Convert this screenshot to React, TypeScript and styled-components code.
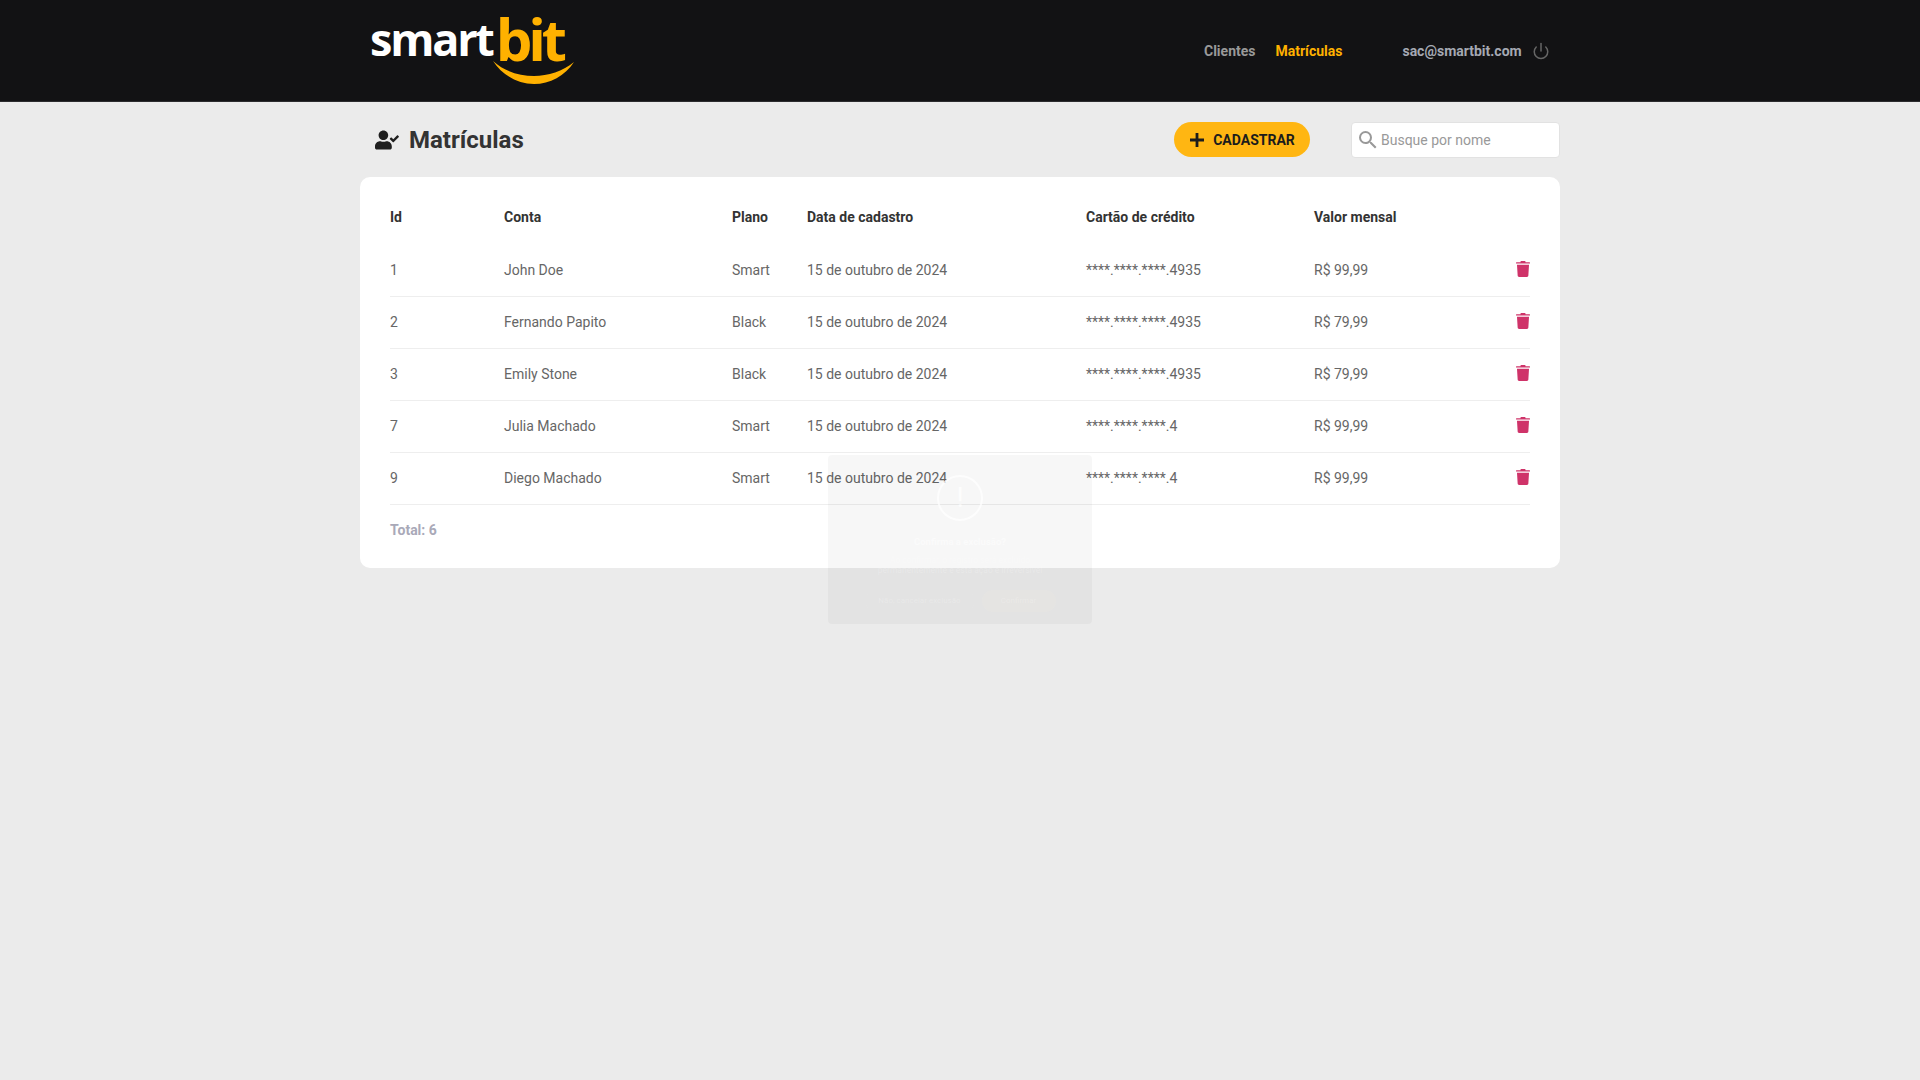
import * as React from 'react';
import styled, { createGlobalStyle } from 'styled-components';
import { FaUserCheck } from 'react-icons/fa';
import { FiPower } from 'react-icons/fi';
import { MdSearch } from 'react-icons/md';

const GlobalStyle = createGlobalStyle`
    * {
        margin: 0;
        padding: 0;
        box-sizing: border-box;
    }
    body {
        background: #ebebeb;
        font-family: Roboto, "Liberation Sans", sans-serif;
        font-size: 14px;
        color: #333;
    }
`;

const rows = [
    { id: 1, name: 'John Doe', plan: 'Smart', card: '****.****.****.4935', price: 'R$ 99,99' },
    { id: 2, name: 'Fernando Papito', plan: 'Black', card: '****.****.****.4935', price: 'R$ 79,99' },
    { id: 3, name: 'Emily Stone', plan: 'Black', card: '****.****.****.4935', price: 'R$ 79,99' },
    { id: 7, name: 'Julia Machado', plan: 'Smart', card: '****.****.****.4', price: 'R$ 99,99' },
    { id: 9, name: 'Diego Machado', plan: 'Smart', card: '****.****.****.4', price: 'R$ 99,99' }
];

const TrashIcon = () => (
    <TrashSvg viewBox="0 0 14 16">
        <path d="M4.5 0.6 C4.5 0.2 4.8 0 5.1 0 L8.9 0 C9.2 0 9.5 0.2 9.5 0.6 L9.5 1.2 L13.5 1.2 C13.8 1.2 14 1.4 14 1.7 L14 2.6 L0 2.6 L0 1.7 C0 1.4 0.2 1.2 0.5 1.2 L4.5 1.2 Z" />
        <path d="M1 3.8 L13 3.8 L12.3 14.8 C12.2 15.5 11.7 16 11 16 L3 16 C2.3 16 1.8 15.5 1.7 14.8 Z" />
    </TrashSvg>
);

const PlusIcon = () => (
    <PlusSvg viewBox="0 0 16 16">
        <path d="M6.4 0 H9.6 V6.4 H16 V9.6 H9.6 V16 H6.4 V9.6 H0 V6.4 H6.4 Z" />
    </PlusSvg>
);

export default function App(): JSX.Element {
    return (
        <Page>
            <GlobalStyle />
            <Header>
                <HeaderInner>
                    <Logo>
                        <LogoSmart>smart</LogoSmart>
                        <LogoBit>bit</LogoBit>
                        <Smile viewBox="0 0 82 24">
                            <path d="M0 0 C12 11 27 15 41 15 C55 15 70 10 81 1 C72 15 57 23 41 23 C25 23 9 14 0 0 Z" fill="#ffb100" />
                        </Smile>
                    </Logo>
                    <Nav>
                        <NavLink>Clientes</NavLink>
                        <NavLink $active>Matrículas</NavLink>
                    </Nav>
                    <UserBox>
                        <UserMail>sac@smartbit.com</UserMail>
                        <FiPower size={18} color="#666" />
                    </UserBox>
                </HeaderInner>
            </Header>
            <Main>
                <TitleBar>
                    <Title>
                        <FaUserCheck size={24} color="#1f1f1f" />
                        Matrículas
                    </Title>
                    <AddButton>
                        <PlusIcon />
                        Cadastrar
                    </AddButton>
                    <SearchBox>
                        <MdSearch size={24} color="#999" />
                        <SearchInput placeholder="Busque por nome" />
                    </SearchBox>
                </TitleBar>
                <Card>
                    <Table>
                        <colgroup>
                            <col width="114" />
                            <col width="228" />
                            <col width="75" />
                            <col width="279" />
                            <col width="228" />
                            <col width="170" />
                            <col />
                        </colgroup>
                        <thead>
                            <tr>
                                <Th>Id</Th>
                                <Th>Conta</Th>
                                <Th>Plano</Th>
                                <Th>Data de cadastro</Th>
                                <Th>Cartão de crédito</Th>
                                <Th>Valor mensal</Th>
                                <Th />
                            </tr>
                        </thead>
                        <tbody>
                            {rows.map(row => (
                                <tr key={row.id}>
                                    <Td>{row.id}</Td>
                                    <Td>{row.name}</Td>
                                    <Td>{row.plan}</Td>
                                    <Td>15 de outubro de 2024</Td>
                                    <Td>{row.card}</Td>
                                    <Td>{row.price}</Td>
                                    <ActionTd><TrashIcon /></ActionTd>
                                </tr>
                            ))}
                        </tbody>
                    </Table>
                    <Total>Total: 6</Total>
                </Card>
            </Main>
            <Modal>
                <AlertRing>!</AlertRing>
                <ModalTitle>Confirma a exclusão?</ModalTitle>
                <ModalText>Ao confirmar, o registro será excluído permanentemente e esta ação é irreversível</ModalText>
                <ModalActions>
                    <GhostButton>Não, cancelar exclusão</GhostButton>
                    <ConfirmButton>Confirmar</ConfirmButton>
                </ModalActions>
            </Modal>
        </Page>
    );
}

const Page = styled.div`
    min-height: 1080px;
`;

const Header = styled.header`
    height: 102px;
    background: #121214;
    border-bottom: 1px solid #2c2c2e;
`;

const HeaderInner = styled.div`
    width: 1200px;
    height: 100%;
    margin: 0 auto;
    display: flex;
    align-items: center;
`;

const Logo = styled.div`
    position: relative;
    width: 210px;
    height: 90px;
    margin-left: 10px;
    display: flex;
    align-items: baseline;
    padding-top: 2px;
    font-family: "Open Sans", sans-serif;
    font-weight: 700;
    line-height: 62px;
`;

const LogoSmart = styled.span`
    font-size: 45px;
    color: #fff;
    letter-spacing: -2.2px;
    transform: translateY(-5px);
`;

const LogoBit = styled.span`
    margin-left: 3px;
    font-size: 58px;
    color: #ffb100;
    letter-spacing: -4.2px;
`;

const Smile = styled.svg`
    position: absolute;
    left: 123px;
    top: 55px;
    width: 82px;
    height: 24px;
`;

const Nav = styled.nav`
    margin-left: 624px;
    display: flex;
    gap: 20px;
`;

const NavLink = styled.a<{ $active?: boolean }>`
    font-weight: 700;
    color: ${props => props.$active ? '#ffb100' : '#999'};
`;

const UserBox = styled.div`
    margin-left: 60px;
    display: flex;
    align-items: center;
    gap: 10px;
`;

const UserMail = styled.span`
    font-weight: 700;
    color: #a5a9b3;
`;

const Main = styled.main`
    width: 1200px;
    margin: 0 auto;
`;

const TitleBar = styled.div`
    height: 75px;
    display: flex;
    align-items: center;
`;

const Title = styled.h1`
    flex: 1;
    display: flex;
    align-items: center;
    gap: 10px;
    padding-left: 15px;
    font-size: 24px;
    font-weight: 700;
    color: #333;
`;

const AddButton = styled.button`
    width: 136px;
    height: 35px;
    display: flex;
    align-items: center;
    justify-content: center;
    gap: 9px;
    padding-left: 1px;
    border: none;
    border-radius: 18px;
    background: #ffb612;
    font-family: Roboto, sans-serif;
    font-size: 14px;
    font-weight: 700;
    text-transform: uppercase;
    color: #1c1c1c;
`;

const PlusSvg = styled.svg`
    width: 14px;
    height: 14px;
    fill: #1c1c1c;
`;

const SearchBox = styled.div`
    width: 209px;
    height: 36px;
    margin-left: 41px;
    display: flex;
    align-items: center;
    gap: 1px;
    padding-left: 4px;
    background: #fff;
    border: 1px solid #e2e2e2;
    border-radius: 4px;
`;

const SearchInput = styled.input`
    flex: 1;
    min-width: 0;
    border: none;
    outline: none;
    background: none;
    font-family: Roboto, sans-serif;
    font-size: 14px;
    &::placeholder {
        color: #999;
        opacity: 1;
    }
`;

const Card = styled.section`
    height: 391px;
    padding: 15px 30px 0;
    background: #fff;
    border-radius: 10px;
`;

const Table = styled.table`
    width: 100%;
    table-layout: fixed;
    border-collapse: collapse;
`;

const Th = styled.th`
    height: 52px;
    padding-bottom: 2px;
    text-align: left;
    font-size: 14px;
    font-weight: 700;
    color: #333;
`;

const Td = styled.td`
    height: 52px;
    border-bottom: 1px solid #eee;
    font-size: 14px;
    color: #666;
`;

const ActionTd = styled(Td)`
    text-align: right;
    padding-bottom: 3px;
`;

const TrashSvg = styled.svg`
    width: 14px;
    height: 16px;
    display: inline-block;
    vertical-align: middle;
    fill: #cf3369;
`;

const Total = styled.p`
    margin-top: 17px;
    font-weight: 700;
    color: #a9a9b8;
`;

const Modal = styled.div`
    position: absolute;
    left: 828px;
    top: 455px;
    width: 264px;
    height: 169px;
    padding-top: 20px;
    display: flex;
    flex-direction: column;
    align-items: center;
    background: rgba(0, 0, 0, 0.03);
    border-radius: 4px;
    color: rgba(255, 255, 255, 0.22);
    text-align: center;
`;

const AlertRing = styled.div`
    width: 46px;
    height: 46px;
    border: 2px solid rgba(255, 255, 255, 0.75);
    border-radius: 50%;
    font-size: 28px;
    line-height: 42px;
    color: rgba(255, 255, 255, 0.75);
`;

const ModalTitle = styled.h2`
    margin-top: 15px;
    font-size: 9.5px;
    font-weight: 700;
    line-height: 12px;
    color: rgba(255, 255, 255, 0.5);
`;

const ModalText = styled.p`
    width: 170px;
    margin-top: 7px;
    font-size: 8.5px;
    line-height: 10px;
`;

const ModalActions = styled.div`
    margin-top: 15px;
    display: flex;
    gap: 7px;
`;

const GhostButton = styled.div`
    width: 110px;
    height: 22px;
    border-radius: 11px;
    font-size: 8px;
    line-height: 22px;
    background: rgba(255, 255, 255, 0.02);
`;

const ConfirmButton = styled.div`
    width: 74px;
    height: 22px;
    border-radius: 11px;
    background: rgba(255, 245, 225, 0.1);
    font-size: 8px;
    line-height: 22px;
`;
